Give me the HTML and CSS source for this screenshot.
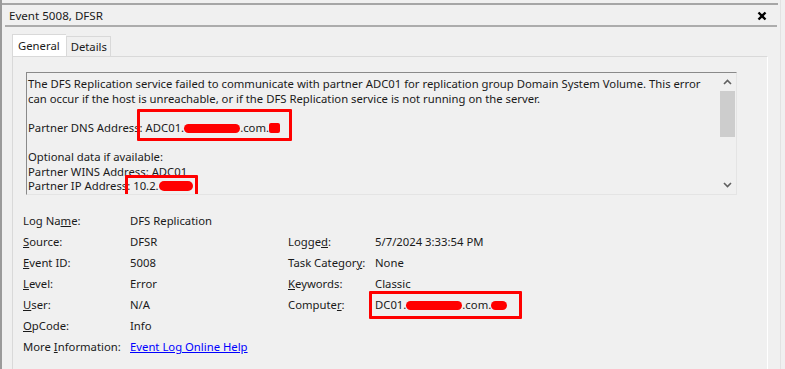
FILE: index.html
```html
<!DOCTYPE html>
<html lang="en">
<head>
  <meta charset="UTF-8" />
  <title>Event 5008, DFSR</title>
  <link rel="stylesheet" href="styles.css">
</head>
<body>
  <div class="window">
    <div class="topline"></div>
    <div class="titlebar">
      <span class="title">Event 5008, DFSR</span>
      <svg class="close" width="10" height="10" viewBox="0 0 10 10">
        <path d="M1.5 1.5 L8.5 8.5 M8.5 1.5 L1.5 8.5" stroke="#000" stroke-width="2.4" />
      </svg>
    </div>

    <div class="tabs">
      <div class="tab active">General</div>
      <div class="tab">Details</div>
    </div>

    <div class="tabpage">
      <div class="descbox">
        <div class="desctext">
          <p>The DFS Replication service failed to communicate with partner ADC01 for replication group Domain System Volume. This error can occur if the host is unreachable, or if the DFS Replication service is not running on the server.</p>
          <p>Partner DNS Address<span class="mark mark-dns">: ADC01.<span class="blob b1"></span>.com.<span class="blob b2"></span></span></p>
          <p>Optional data if available:<br>
            Partner WINS Address: ADC01<br>
            Partner IP Address<span class="mark mark-ip">: 10.2.<span class="blob b3"></span></span></p>
        </div>
        <div class="scrollbar">
          <svg class="arrow" width="9" height="6" viewBox="0 0 9 6"><path d="M1 5 L4.5 1.5 L8 5" fill="none" stroke="#606060" stroke-width="1.6" /></svg>
          <div class="thumb"></div>
          <div class="track"></div>
          <svg class="arrow" width="9" height="6" viewBox="0 0 9 6"><path d="M1 1 L4.5 4.5 L8 1" fill="none" stroke="#606060" stroke-width="1.6" /></svg>
        </div>
      </div>

      <div class="props">
        <span>Log Na<u>m</u>e:</span><span>DFS Replication</span><span></span><span></span>
        <span><u>S</u>ource:</span><span>DFSR</span><span>Logge<u>d</u>:</span><span>5/7/2024 3:33:54 PM</span>
        <span><u>E</u>vent ID:</span><span>5008</span><span>Task Categor<u>y</u>:</span><span>None</span>
        <span><u>L</u>evel:</span><span>Error</span><span><u>K</u>eywords:</span><span>Classic</span>
        <span><u>U</u>ser:</span><span>N/A</span><span>Compute<u>r</u>:</span><span><span class="mark mark-pc">DC01.<span class="blob b4"></span>.com.<span class="blob b5"></span></span></span>
        <span><u>O</u>pCode:</span><span>Info</span><span></span><span></span>
        <span>More <u>I</u>nformation:</span><span><a href="#">Event Log Online Help</a></span><span></span><span></span>
      </div>
    </div>
  </div>
</body>
</html>
```

FILE: styles.css
```css
body {
  margin: 0;
  background: #f0f0f0;
  font-family: "Noto Sans", "Open Sans", sans-serif;
  font-size: 11.3px;
  color: #1a1a1a;
  overflow: hidden;
}

.window {
  height: 369px;
  border-left: 2px solid #9a9a9a;
  border-right: 1px solid #e2e2e2;
  width: 781px;
  box-sizing: border-box;
}

.topline {
  height: 3px;
  border-bottom: 2px solid #a6a6a6;
  margin-right: 2px;
}

.titlebar {
  display: flex;
  align-items: center;
  justify-content: space-between;
  height: 20px;
  margin: 0 3px 0 3px;
  padding: 0 10px 0 4px;
  border-bottom: 2px solid #acacac;
}

.title {
  font-size: 11.6px;
}

.close {
  margin-top: 1px;
}

.tabs {
  display: flex;
  align-items: flex-end;
  margin: 8px 0 0 10px;
  height: 21px;
}

.tab {
  height: 19px;
  line-height: 19px;
  padding: 0 3px 0 4px;
  border: 1px solid #d9d9d9;
  border-bottom: none;
  background: #f0f0f0;
}

.tab.active {
  height: 21px;
  line-height: 21px;
  padding: 0 6px 0 5px;
  background: #fff;
  border-right: none;
}

.tabpage {
  margin: 0 12px 0 10px;
  border: 1px solid #d9d9d9;
  border-right: 1px solid #fff;
  height: 320px;
  padding: 15px 0 0 13px;
  box-sizing: border-box;
}

.descbox {
  display: flex;
  width: 711px;
  height: 123px;
  border-top: 1px solid #8a8a8a;
  border-left: 1px solid #8a8a8a;
  border-right: 1px solid #e4e4e4;
  border-bottom: 1px solid #e4e4e4;
  box-sizing: border-box;
}

.desctext {
  flex: 1;
  padding: 4px 3px 0 1px;
  line-height: 14.6px;
  overflow: hidden;
}

.desctext p {
  margin: 0 0 14.6px 0;
}

.scrollbar {
  width: 17px;
  display: flex;
  flex-direction: column;
  align-items: center;
}

.arrow {
  margin: 6px 0 6px;
}

.thumb {
  width: 15px;
  height: 46px;
  background: #cdcdcd;
}

.track {
  flex: 1;
}

.mark {
  position: relative;
}

.mark::after {
  content: "";
  position: absolute;
  border: 3px solid #f00;
  border-radius: 1px;
}

.mark-dns::after {
  left: -3px;
  right: -12px;
  top: -11px;
  bottom: -6px;
}

.mark-ip::after {
  left: -2px;
  right: -5px;
  top: -3px;
  bottom: -10px;
}

.mark-pc::after {
  left: -6px;
  right: -15px;
  top: -6px;
  bottom: -7px;
}

.blob {
  display: inline-block;
  background: #f00;
  height: 9px;
  border-radius: 5px;
  vertical-align: -1px;
}

.b1 { width: 56px; }
.b2 { width: 11px; border-radius: 2px; height: 10px; }
.b3 { width: 34px; height: 10px; }
.b4 { width: 56px; }
.b5 { width: 16px; }

.props {
  display: grid;
  grid-template-columns: 107px 158px 87px auto;
  grid-auto-rows: 21px;
  align-items: center;
  margin: 15px 0 0 -3px;
}

.props a {
  color: #0000ff;
}
```
